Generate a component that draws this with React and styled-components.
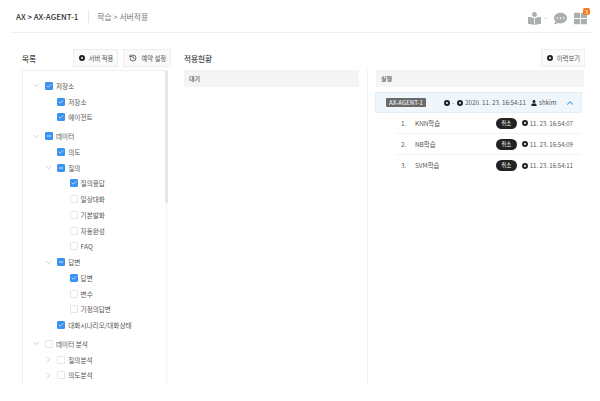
import React from 'react';
import styled, {createGlobalStyle} from 'styled-components';
import {ChevronDown, ChevronRight, ChevronUp, Check, Minus, History} from 'lucide-react';
import {FaBookReader, FaCommentDots, FaThLarge, FaUser} from 'react-icons/fa';

const GlobalStyle = createGlobalStyle`
html, body {
    margin: 0;
    padding: 0;
    background: #fff;
}
body {
    width: 600px;
    height: 401px;
    overflow: hidden;
    font-family: "Noto Sans CJK KR", "Noto Sans", sans-serif;
    color: #444;
}
`

const Page = styled.div`
    width: 600px;
    height: 401px;
    overflow: hidden;
`

const Header = styled.header`
    height: 32px;
    margin: 0 7px 0 11px;
    padding: 0 0 0 5px;
    border-bottom: 1px solid #f0f0f0;
    display: flex;
    align-items: center;
`

const Title = styled.div`
    font-size: 7.9px;
    font-weight: 500;
    color: #333;
    padding-right: 10px;
    margin-right: 8px;
    line-height: 13px;
    border-right: 1px solid #e8e8e8;
`

const Crumb = styled.div`
    font-size: 7.8px;
    color: #777;
    flex: 1;
`

const HeaderIcons = styled.div`
    display: flex;
    align-items: center;
    color: #a9afad;
    padding-right: 6px;
    margin-top: 4px;
`

const MenuCaret = styled.span`
    display: flex;
    margin: 0 6px 0 2px;
`

const NoticeIcon = styled.div`
    position: relative;
    display: flex;
    margin-left: 7px;
`

const Badge = styled.span`
    position: absolute;
    top: -4px;
    right: -3px;
    width: 7px;
    height: 7px;
    border-radius: 2px;
    background: #f47b20;
    color: #fff;
    font-size: 5px;
    line-height: 7px;
    text-align: center;
`

const Main = styled.main`
    display: grid;
    grid-template-columns: 149px 175px 212px;
    column-gap: 13px;
    padding: 16px 0 0 22px;
`

const Column = styled.section`
    min-width: 0;
`

const ColumnHead = styled.div`
    height: 18px;
    margin-bottom: 3px;
    display: flex;
    align-items: center;
    justify-content: space-between;
`

const ColumnTitle = styled.h2`
    margin: 0;
    font-size: 7.6px;
    font-weight: 500;
    color: #444;
`

const Buttons = styled.div`
    display: flex;
    gap: 5px;
`

const Button = styled.button`
    height: 18px;
    padding: 0 4px 0 5px;
    display: flex;
    align-items: center;
    gap: 4px;
    background: #fafafa;
    border: 1px solid #eee;
    font-family: inherit;
    font-size: 6.3px;
    color: #555;
    margin-right: ${({$overhang}) => ($overhang ? -1 : 0)}px;
`

const RingSvg = styled.svg`
    width: 6px;
    height: 6px;
    flex: none;
    fill: none;
    stroke: #222;
    stroke-width: 2;
`

const TreePanel = styled.div`
    position: relative;
    width: 146px;
    height: 315px;
    box-sizing: border-box;
    border: 1px solid #f1f1f1;
    border-right: 0;
    border-bottom: 0;
    overflow: hidden;
    padding-top: 7px;
`

const ScrollTrack = styled.div`
    position: absolute;
    top: 0;
    right: 0;
    bottom: 0;
    width: 3px;
    background: #fafafa;
`

const ScrollThumb = styled.div`
    height: 132px;
    background: #e6e6e6;
`

const TreeRow = styled.div`
    height: 15.75px;
    margin-top: ${({$gap}) => $gap || 0}px;
    padding-left: ${({$depth}) => 9 + $depth * 12.3}px;
    display: flex;
    align-items: center;
    font-size: 6.6px;
    color: #555;
    white-space: nowrap;
`

const Toggle = styled.span`
    width: 9px;
    margin-right: 4px;
    display: flex;
    color: #999;
    visibility: ${({$hidden}) => ($hidden ? 'hidden' : 'visible')};
`

const Box = styled.span`
    width: 8px;
    height: 8px;
    box-sizing: border-box;
    margin-right: 3px;
    border-radius: 1px;
    display: flex;
    align-items: center;
    justify-content: center;
    color: #fff;
    background: ${({$state}) => ($state === 'off' ? '#fff' : '#3a93f0')};
    border: 1px solid ${({$state}) => ($state === 'off' ? '#e6e6e6' : '#3a93f0')};
`

const StateBar = styled.div`
    height: 17px;
    padding-left: 5px;
    display: flex;
    align-items: center;
    background: #f4f4f4;
    font-size: 6px;
    font-weight: 500;
    color: #555;
`

const RunColumn = styled(Column)`
    position: relative;
    margin-left: 4px;
`

const Divider = styled.div`
    position: absolute;
    left: -9px;
    top: 21px;
    width: 1px;
    height: 315px;
    background: #f0f0f0;
`

const AgentRow = styled.div`
    height: 21px;
    width: 207px;
    box-sizing: border-box;
    margin: 5px 0 0 -1px;
    padding: 0 6px 0 10px;
    display: flex;
    align-items: center;
    background: #eff6fc;
    border: 1px solid #e2eef8;
    font-size: 6.2px;
    color: #444;
`

const AgentTag = styled.span`
    width: 40px;
    height: 9px;
    line-height: 9px;
    border-radius: 1px;
    background: #6a6a6a;
    color: #eee;
    font-size: 6px;
    font-weight: 500;
    text-align: center;
    margin-right: 18px;
`

const Meta = styled.span`
    display: flex;
    align-items: center;
    gap: 2px;
    margin-right: ${({$gap}) => $gap || 0}px;
    color: #555;
    white-space: nowrap;
`

const Expand = styled.span`
    margin-left: auto;
    display: flex;
    color: #3a93f0;
`

const JobRow = styled.div`
    height: 21px;
    margin: 0 3px 0 20px;
    padding: 0 8px 0 5px;
    display: flex;
    align-items: center;
    border-bottom: ${({$last}) => ($last ? '0' : '1px solid #f3f3f3')};
    box-sizing: border-box;
    font-size: 6.4px;
    color: #555;
`

const JobNumber = styled.span`
    width: 14px;
`

const JobName = styled.span`
    flex: 1;
`

const JobTime = styled(Meta)`
    font-size: 6.1px;
`

const CancelPill = styled.span`
    width: 21px;
    height: 11px;
    line-height: 11px;
    border-radius: 6px;
    background: #222;
    color: #fff;
    font-size: 5.4px;
    text-align: center;
    margin-right: 5px;
`

const tree = [
    {label: '저장소', depth: 0, state: 'on', toggle: 'open'},
    {label: '저장소', depth: 1, state: 'on'},
    {label: '에이전트', depth: 1, state: 'on'},
    {label: '데이터', depth: 0, state: 'some', toggle: 'open', gap: 3},
    {label: '의도', depth: 1, state: 'on'},
    {label: '질의', depth: 1, state: 'some', toggle: 'open'},
    {label: '질의응답', depth: 2, state: 'on'},
    {label: '일상대화', depth: 2, state: 'off'},
    {label: '기본발화', depth: 2, state: 'off'},
    {label: '자동완성', depth: 2, state: 'off'},
    {label: 'FAQ', depth: 2, state: 'off'},
    {label: '답변', depth: 1, state: 'some', toggle: 'open'},
    {label: '답변', depth: 2, state: 'on'},
    {label: '변수', depth: 2, state: 'off'},
    {label: '기정의답변', depth: 2, state: 'off'},
    {label: '대화시나리오/대화상태', depth: 1, state: 'on'},
    {label: '데이터 분석', depth: 0, state: 'off', toggle: 'open', gap: 3},
    {label: '질의분석', depth: 1, state: 'off', toggle: 'closed'},
    {label: '의도분석', depth: 1, state: 'off', toggle: 'closed'},
]

const jobs = [
    {name: 'KNN학습', time: '11. 23. 16:54:07'},
    {name: 'NB학습', time: '11. 23. 16:54:09'},
    {name: 'SVM학습', time: '11. 23. 16:54:11'},
]

const RingIcon = () => (
    <RingSvg viewBox="0 0 6 6">
        <circle cx="3" cy="3" r="2"/>
    </RingSvg>
)

const TreeItem = ({label, depth, state, toggle, gap}) => (
    <TreeRow $depth={depth} $gap={gap}>
        <Toggle $hidden={!toggle}>
            {toggle === 'closed' ? <ChevronRight size={9} strokeWidth={1.2}/> : <ChevronDown size={9} strokeWidth={1.2}/>}
        </Toggle>
        <Box $state={state}>
            {state === 'on' && <Check size={6} strokeWidth={2.5}/>}
            {state === 'some' && <Minus size={6} strokeWidth={3}/>}
        </Box>
        {label}
    </TreeRow>
)

const App = () => (
    <Page>
        <GlobalStyle/>
        <Header>
            <Title>AX &gt; AX-AGENT-1</Title>
            <Crumb>학습 &gt; 서버적용</Crumb>
            <HeaderIcons>
                <FaBookReader size={13}/>
                <MenuCaret><ChevronDown size={5} strokeWidth={2.5}/></MenuCaret>
                <FaCommentDots size={13}/>
                <NoticeIcon>
                    <FaThLarge size={13}/>
                    <Badge>3</Badge>
                </NoticeIcon>
            </HeaderIcons>
        </Header>
        <Main>
            <Column>
                <ColumnHead>
                    <ColumnTitle>목록</ColumnTitle>
                    <Buttons>
                        <Button><RingIcon/>서버 적용</Button>
                        <Button><History size={8} strokeWidth={2} color="#222"/>예약 설정</Button>
                    </Buttons>
                </ColumnHead>
                <TreePanel>
                    {tree.map((item, i) => <TreeItem key={i} {...item}/>)}
                    <ScrollTrack><ScrollThumb/></ScrollTrack>
                </TreePanel>
            </Column>
            <Column>
                <ColumnHead>
                    <ColumnTitle>적용현황</ColumnTitle>
                </ColumnHead>
                <StateBar>대기</StateBar>
            </Column>
            <RunColumn>
                <ColumnHead>
                    <span/>
                    <Button $overhang><RingIcon/>이력보기</Button>
                </ColumnHead>
                <Divider/>
                <StateBar>실행</StateBar>
                <AgentRow>
                    <AgentTag>AX-AGENT-1</AgentTag>
                    <Meta $gap={3}><RingIcon/>-</Meta>
                    <Meta $gap={5}><RingIcon/>2020. 11. 23. 16:54:11</Meta>
                    <Meta><FaUser size={6} color="#222"/>shkim</Meta>
                    <Expand><ChevronUp size={10} strokeWidth={2.5}/></Expand>
                </AgentRow>
                {jobs.map((job, i) => (
                    <JobRow key={job.name} $last={i === jobs.length - 1}>
                        <JobNumber>{i + 1}.</JobNumber>
                        <JobName>{job.name}</JobName>
                        <CancelPill>취소</CancelPill>
                        <JobTime><RingIcon/>{job.time}</JobTime>
                    </JobRow>
                ))}
            </RunColumn>
        </Main>
    </Page>
);

export default App;
